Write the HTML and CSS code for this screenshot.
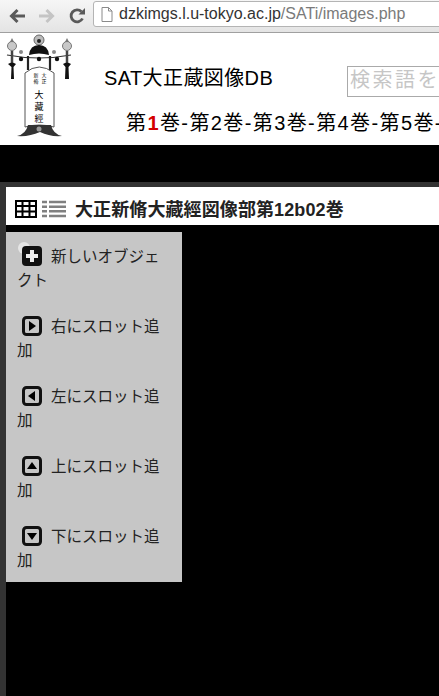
FILE: index.html
```html
<!DOCTYPE html>
<html lang="ja">
<head>
<meta charset="utf-8">
<title>SAT大正蔵図像DB</title>
<link rel="stylesheet" href="styles.css">
</head>
<body>
<div class="chrome">
  <svg class="nav-icon" viewBox="0 0 18 18"><path d="M17 9H4M9.500 3 3.500 9l6 6" fill="none" stroke="#5a5a5a" stroke-width="3"/></svg>
  <svg class="nav-icon" viewBox="0 0 18 18"><path d="M1 9h13M8.500 3l6 6-6 6" fill="none" stroke="#c4c4c4" stroke-width="3"/></svg>
  <svg class="nav-icon" viewBox="0 0 18 18"><path d="M14.500 11.500A6 6 0 1 1 13.500 4.800" fill="none" stroke="#5a5a5a" stroke-width="2.800"/><path d="M10.500 7.500h6.500V1z" fill="#5a5a5a"/></svg>
  <div class="omnibox">
    <svg class="doc" viewBox="0 0 12 15"><path d="M1 .5h6.500L11 4v10.500H1zM7.500.5V4H11" fill="#fff" stroke="#8a8a8a"/></svg>
    <span class="host">dzkimgs.l.u-tokyo.ac.jp</span><span class="path">/SATi/images.php</span>
  </div>
</div>
<header class="site">
  <svg class="logo" viewBox="0 0 72 106">
    <path d="M3 22Q35 28 67 22" fill="none" stroke="#333" stroke-width="1.200"/>
    <circle cx="8" cy="13" r="4.500" fill="#c8c8c8" stroke="#777"/>
    <path d="M8 5l-2 4h4z" fill="#777"/>
    <circle cx="63" cy="13" r="4.500" fill="#c8c8c8" stroke="#777"/>
    <path d="M63 5l-2 4h4z" fill="#777"/>
    <circle cx="35" cy="7" r="5" fill="#bbb" stroke="#666"/>
    <circle cx="35" cy="8" r="2" fill="#222"/>
    <path d="M25 22Q26 12 35 12T45 22Q35 19 25 22z" fill="#111"/>
    <circle cx="17" cy="19" r="2" fill="#888"/><circle cx="50" cy="19" r="2" fill="#888"/>
    <path d="M8 18v14M63 18v14" stroke="#444" stroke-width="2.500"/>
    <path d="M4 31q4-3 8 0l-2.500 3 .5 12H7l.5-12zM59 31q4-3 8 0l-2.500 3 .5 12h-4l.5-12z" fill="#111"/>
    <circle cx="17" cy="26" r="2.200" fill="#111"/><circle cx="35" cy="26" r="2.200" fill="#111"/><circle cx="53" cy="26" r="2.200" fill="#111"/>
    <path d="M24 23v14M46 23v14" stroke="#222" stroke-width="2.200"/>
    <path d="M21 40Q35 28 50 40V94Q35 90 21 94z" fill="#fff" stroke="#555"/>
    <path d="M13 103Q22 101 24 92H47Q49 101 58 103Q46 104 36 99 25 104 13 103z" fill="#333"/>
    <circle cx="35" cy="96" r="2.500" fill="#999"/>
    <text class="logo-small" x="40" y="44">大</text>
    <text class="logo-small" x="40" y="50">正</text>
    <text class="logo-small" x="32" y="44">新</text>
    <text class="logo-small" x="32" y="50">脩</text>
    <text class="logo-big" x="35" y="65">大</text>
    <text class="logo-big" x="35" y="77">藏</text>
    <text class="logo-big" x="35" y="89">經</text>
  </svg>
  <div class="site-main">
    <div class="title-row">
      <h1>SAT大正蔵図像DB</h1>
      <div class="search">検索語を入</div>
    </div>
    <nav class="vols">第<b>1</b>巻-第2巻-第3巻-第4巻-第5巻-</nav>
  </div>
</header>
<main class="stage">
  <div class="window">
    <div class="win-title">
      <svg class="view grid-view" viewBox="0 0 22 18"><path d="M1 1h20v16H1zM1 6h20M1 11.500h20M7.500 1v16M14.500 1v16" fill="none" stroke="#000" stroke-width="2"/></svg>
      <svg class="view list-view" viewBox="0 0 24 18"><path d="M0 2h5M7 2h17M0 6.700h5M7 6.700h17M0 11.300h5M7 11.300h17M0 16h5M7 16h17" stroke="#808080" stroke-width="2.600"/></svg>
      <span class="win-name">大正新脩大藏經図像部第12b02巻</span>
    </div>
    <ul class="menu">
      <li><svg class="ico" viewBox="0 0 20 20"><circle cx="2" cy="2" r="6" fill="#e6e6e6"/><rect x="0" y="0" width="20" height="20" rx="4" fill="#111"/><path d="M10 4v12M4 10h12" stroke="#eee" stroke-width="4"/></svg>新しいオブジェクト</li>
      <li><svg class="ico" viewBox="0 0 20 20"><rect x="1.500" y="1.500" width="17" height="17" rx="3" fill="none" stroke="#111" stroke-width="3"/><path d="M7 5l7 5-7 5z"/></svg>右にスロット追加</li>
      <li><svg class="ico" viewBox="0 0 20 20"><rect x="1.500" y="1.500" width="17" height="17" rx="3" fill="none" stroke="#111" stroke-width="3"/><path d="M13 5l-7 5 7 5z"/></svg>左にスロット追加</li>
      <li><svg class="ico" viewBox="0 0 20 20"><rect x="1.500" y="1.500" width="17" height="17" rx="3" fill="none" stroke="#111" stroke-width="3"/><path d="M5 13l5-7 5 7z"/></svg>上にスロット追加</li>
      <li><svg class="ico" viewBox="0 0 20 20"><rect x="1.500" y="1.500" width="17" height="17" rx="3" fill="none" stroke="#111" stroke-width="3"/><path d="M5 7l5 7 5-7z"/></svg>下にスロット追加</li>
    </ul>
  </div>
</main>
</body>
</html>
```
FILE: styles.css
```css
* { box-sizing: border-box; }
html, body { margin: 0; height: 100%; overflow: hidden; background: #000; }
body {
  width: 439px;
  height: 696px;
  font-family: "Liberation Sans", "Noto Sans CJK JP", sans-serif;
  color: #000;
}
.chrome {
  height: 33px;
  display: flex;
  align-items: center;
  gap: 12px;
  padding: 0 0 0 8px;
  background: linear-gradient(#f6f6f6, #e4e4e4);
  border-bottom: 1px solid #a0a0a0;
  overflow: hidden;
}
.nav-icon { width: 18px; height: 18px; flex: none; }
.omnibox {
  flex: 1;
  height: 26px;
  margin: -4px -4px 0 -5px;
  display: flex;
  align-items: center;
  background: #fff;
  border: 1px solid #b4b4b4;
  border-radius: 3px;
  padding-left: 7px;
  font-size: 16px;
  white-space: nowrap;
  overflow: hidden;
}
.doc { width: 12px; height: 15px; margin-right: 6px; flex: none; }
.host { color: #333; }
.path { color: #7a7a7a; }
.site {
  height: 112px;
  background: #fff;
  display: flex;
  overflow: hidden;
}
.logo { width: 72px; height: 106px; flex: none; margin: 0 0 0 4px; }
.logo-small { font-size: 5px; font-family: "Noto Sans CJK JP", sans-serif; text-anchor: middle; }
.logo-big { font-size: 9px; text-anchor: middle; font-family: "Noto Sans CJK JP", sans-serif; }
.site-main { flex: none; padding: 33px 0 0 28px; white-space: nowrap; }
.title-row { display: flex; align-items: flex-start; }
h1 { margin: -1px 0 0; font-size: 20px; font-weight: 400; line-height: 26px; width: 243px; letter-spacing: 0.400px; }
.search {
  width: 200px;
  height: 31px;
  border: 1px solid #aaa;
  padding-left: 2px;
  font-size: 20px;
  letter-spacing: 2.500px;
  line-height: 27px;
  color: #c6c6c6;
}
.vols {
  margin: 13px 0 0 22px;
  font-size: 20px;
  line-height: 26px;
  width: 320px;
  letter-spacing: 1.400px;
}
.vols b { color: #d40000; }
.stage { height: 551px; padding-top: 37px; overflow: hidden; }
.window {
  height: 514px;
  background: #000;
  border-top: 5px solid #333;
  border-left: 6px solid #333;
}
.win-title {
  height: 38px;
  background: #fff;
  display: flex;
  align-items: center;
  padding: 6px 0 0 9px;
  gap: 4px;
}
.view { height: 18px; flex: none; }
.grid-view { width: 22px; }
.list-view { width: 24px; margin-left: 1px; }
.win-name {
  margin: -3px 0 0 5px;
  font-size: 18px;
  font-weight: 700;
  color: #222;
  white-space: nowrap;
  letter-spacing: 0.100px;
}
.menu {
  list-style: none;
  margin: 7px 0 0;
  padding: 13px 0 0 11px;
  width: 176px;
  height: 350px;
  background: #c6c6c6;
  font-size: 15.500px;
  line-height: 24px;
  color: #222;
}
.menu li { height: 70px; padding-right: 10px; }
.ico { width: 20px; height: 20px; margin: 0 9px 0 5px; vertical-align: -4px; overflow: visible; }
```
